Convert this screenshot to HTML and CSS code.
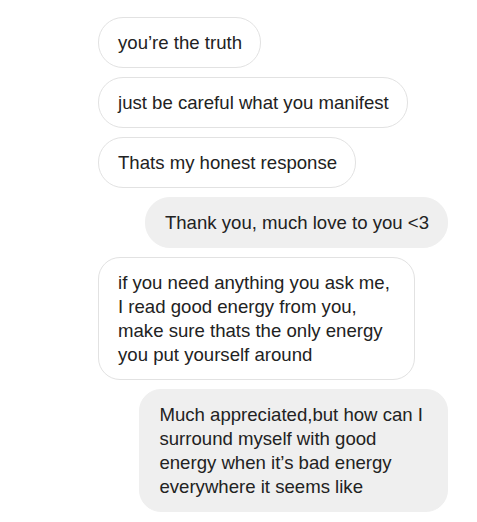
FILE: index.html
```html
<!DOCTYPE html>
<html lang="en">
<head>
  <meta charset="UTF-8">
  <meta name="viewport" content="width=device-width, initial-scale=1.0">
  <title>Messages</title>
  <link rel="stylesheet" href="styles.css">
</head>
<body>
  <div class="thread">
    <div class="bubble incoming">you’re the truth</div>
    <div class="bubble incoming">just be careful what you manifest</div>
    <div class="bubble incoming">Thats my honest response</div>
    <div class="bubble outgoing">Thank you, much love to you &lt;3</div>
    <div class="bubble incoming multi">if you need anything you ask me,<br>I read good energy from you,<br>make sure thats the only energy<br>you put yourself around</div>
    <div class="bubble outgoing multi">Much appreciated,but how can I<br>surround myself with good<br>energy when it’s bad energy<br>everywhere it seems like</div>
  </div>
</body>
</html>
```

FILE: styles.css
```css
* {
  margin: 0;
  padding: 0;
  box-sizing: border-box;
}

body {
  background: #fff;
  font-family: 'Liberation Sans', Arial, sans-serif;
  color: #222;
}

.thread {
  display: flex;
  flex-direction: column;
  gap: 9px;
  padding: 17px 29px 0 98px;
}

.bubble {
  font-size: 18.6px;
  line-height: 24px;
  padding: 13px 18px 12px 19px;
  border-radius: 25px;
  border: 1px solid #e2e2e2;
}

.bubble.multi {
  border-radius: 22px;
  padding-right: 24px;
}

.incoming {
  align-self: flex-start;
  background: #fff;
}

.outgoing {
  align-self: flex-end;
  background: #efefef;
  border-color: #efefef;
}
```
